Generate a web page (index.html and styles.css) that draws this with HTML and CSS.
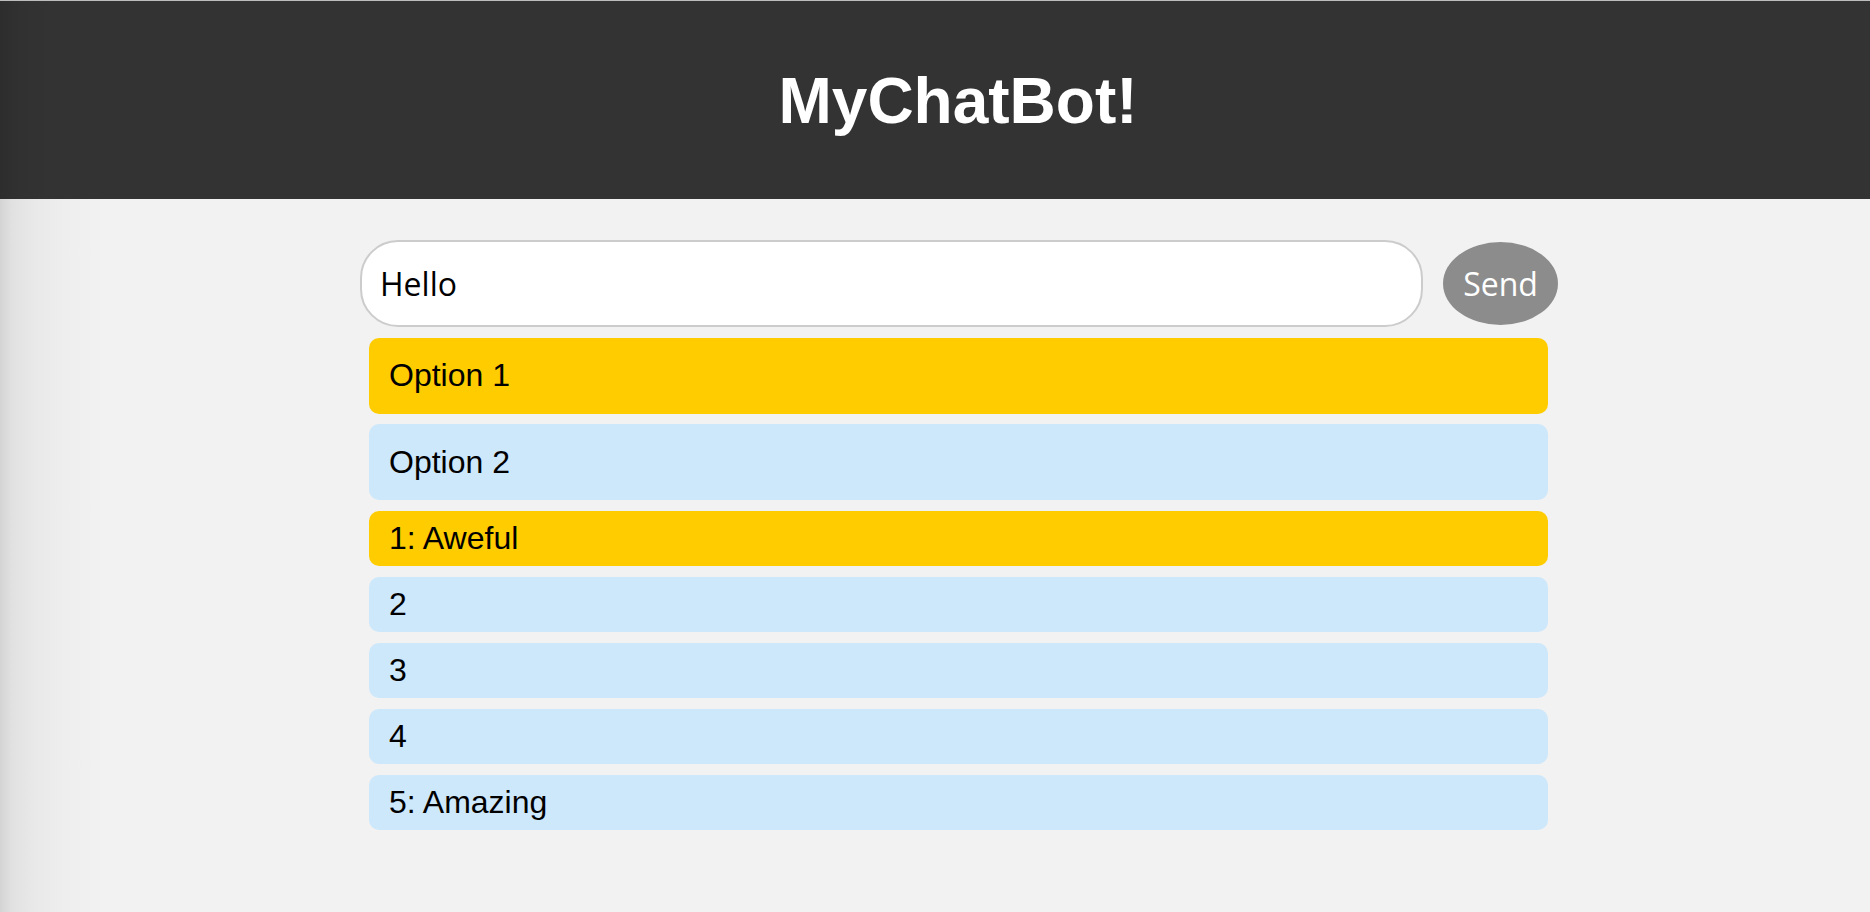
FILE: index.html
```html
<!DOCTYPE html>
<html lang="en">
<head>
<meta charset="utf-8">
<title>MyChatBot!</title>
<link rel="stylesheet" href="styles.css">
</head>
<body>
<header class="topbar">
  <h1 class="title">MyChatBot!</h1>
</header>
<main class="page">
  <div class="chat">
    <div class="composer">
      <input class="message" type="text" value="Hello">
      <button class="send" type="button">Send</button>
    </div>
    <ul class="choices">
      <li class="choice big active">Option 1</li>
      <li class="choice big">Option 2</li>
      <li class="choice small active">1: Aweful</li>
      <li class="choice small">2</li>
      <li class="choice small">3</li>
      <li class="choice small">4</li>
      <li class="choice small">5: Amazing</li>
    </ul>
  </div>
</main>
</body>
</html>
```

FILE: styles.css
```css
html, body {
  margin: 0;
  padding: 0;
}

body {
  min-height: 912px;
  background: linear-gradient(to right, #d4d4d4 0px, #e1e1e1 12px, #e9e9e9 35px, #eeeeee 65px, #f2f2f2 105px) #f2f2f2;
  font-family: "Liberation Sans", Arial, sans-serif;
  color: #000;
}

.topbar {
  height: 198px;
  border-top: 1px solid #bdbdbd;
  background: linear-gradient(to right, #2d2d2d 0px, #313131 20px, #333333 50px) #333333;
  display: flex;
  align-items: center;
  justify-content: center;
  padding-left: 46px;
  box-sizing: content-box;
}

.title {
  margin: 0;
  color: #ffffff;
  font-family: "Liberation Sans", Arial, sans-serif;
  font-weight: bold;
  font-size: 64px;
  line-height: 1;
  padding-top: 1px;
}

.page {
  padding: 41px 0 0 48px;
  display: flex;
  justify-content: center;
}

.chat {
  width: 1198px;
  display: flex;
  flex-direction: column;
  gap: 10.5px;
}

.composer {
  display: flex;
  align-items: center;
  gap: 20px;
}

.message {
  flex: 1;
  height: 87px;
  box-sizing: border-box;
  border: 2px solid #cccccc;
  border-radius: 38px;
  background: #ffffff;
  padding: 0 18px;
  font-family: "Open Sans", "Noto Sans", sans-serif;
  font-size: 32px;
  color: #000;
  outline: none;
}

.send {
  width: 115px;
  height: 83px;
  border: none;
  border-radius: 50%;
  background: #8c8c8c;
  color: #ffffff;
  font-family: "Open Sans", "Noto Sans", sans-serif;
  font-size: 32px;
  padding: 0;
  margin-bottom: 1px;
}

.choices {
  list-style: none;
  margin: 0 10px 0 9px;
  padding: 0;
  display: flex;
  flex-direction: column;
  gap: 10.5px;
}

.choice {
  background: #cde7fb;
  border-radius: 10px;
  padding: 0 20px;
  font-size: 32px;
  display: flex;
  align-items: center;
  box-sizing: border-box;
}

.choice.active {
  background: #ffcc00;
}

.choice.big {
  height: 76px;
}

.choice.small {
  height: 55.5px;
}
```
